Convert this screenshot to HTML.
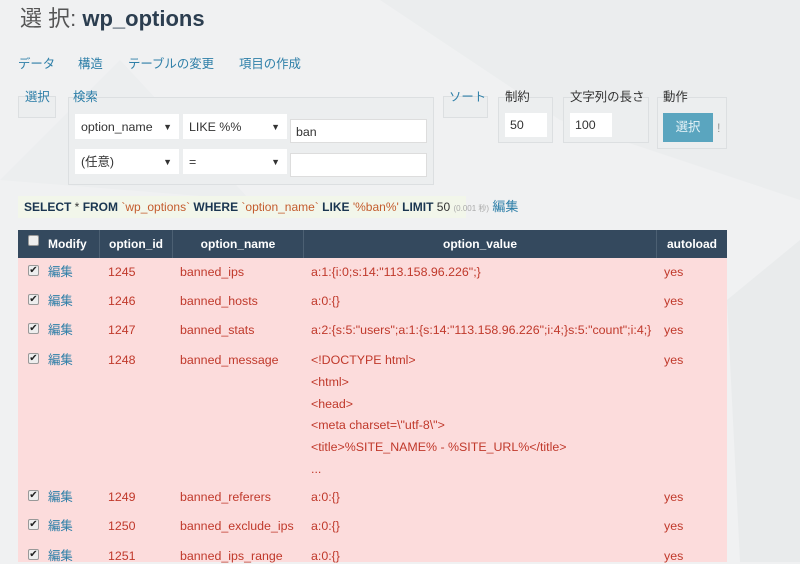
<!DOCTYPE html>
<html><head><meta charset="utf-8"><style>
*{margin:0;padding:0;box-sizing:border-box}
body{width:800px;height:562px;overflow:hidden;background:#f0f1f2;font-family:"Liberation Sans","Noto Sans CJK JP",sans-serif;font-size:12.4px;color:#333;position:relative}
.a{position:absolute;white-space:nowrap;line-height:16px}
.lk{color:#2e7fa8}
.box{position:absolute;border:1px solid #dcdfe1;background:#eceeef}
.sel{position:absolute;background:#fff;height:25px;font-size:12.4px;padding:5px 6px;color:#333;line-height:16px}
.sel i{position:absolute;right:7px;top:5px;font-style:normal;font-size:9px}
.inp{position:absolute;background:#fff;border:1px solid #ddd;height:24px;padding:4px 5px;line-height:16px}
.r{color:#c0392b}
.bg{position:absolute;background:#fcdcdc;left:18px;top:258px;width:709px;height:304px}
.th{position:absolute;top:230px;height:28px;background:#34495e;color:#fff;font-weight:bold;line-height:28px;text-align:center;border-right:1px solid #4c6073;font-size:12px}
.cb{position:absolute;width:11px;height:11px;background:#eee;border:1px solid #999;border-radius:2px;font-size:10px;line-height:9px;text-align:center;color:#222}
</style></head><body>
<svg class="a" style="left:0;top:0" width="800" height="562"><polygon points="380,0 800,0 800,200 560,120" fill="#ebedee"/><polygon points="0,180 120,60 250,200" fill="#eceeef"/><polygon points="727,300 800,240 800,562 740,562" fill="#e9ebec"/></svg>
<div class="a" style="left:20px;top:6px;font-size:22px;line-height:26px;color:#333"><span style="color:#555">選 択:</span> <b style="color:#2c3e50">wp_options</b></div>
<div class="a lk" style="left:18px;top:56px">データ</div>
<div class="a lk" style="left:78px;top:56px">構造</div>
<div class="a lk" style="left:128px;top:56px">テーブルの変更</div>
<div class="a lk" style="left:239px;top:56px">項目の作成</div>
<div class="box" style="left:18px;top:96px;width:38px;height:22px"></div>
<div class="a lk" style="left:25px;top:89px">選択</div>
<div class="box" style="left:68px;top:97px;width:366px;height:88px"></div>
<div class="a lk" style="left:73px;top:89px">検索</div>
<div class="sel" style="left:75px;top:114px;width:104px">option_name<i>▼</i></div>
<div class="sel" style="left:183px;top:114px;width:104px">LIKE %%<i>▼</i></div>
<div class="inp" style="left:290px;top:119px;width:137px">ban</div>
<div class="sel" style="left:75px;top:149px;width:104px">(任意)<i>▼</i></div>
<div class="sel" style="left:183px;top:149px;width:104px">=<i>▼</i></div>
<div class="inp" style="left:290px;top:153px;width:137px"></div>
<div class="box" style="left:443px;top:96px;width:45px;height:22px"></div>
<div class="a lk" style="left:449px;top:89px">ソート</div>
<div class="box" style="left:498px;top:97px;width:55px;height:46px"></div>
<div class="a" style="left:505px;top:89px">制約</div>
<div class="inp" style="left:505px;top:113px;width:42px;border:0">50</div>
<div class="box" style="left:563px;top:97px;width:86px;height:46px"></div>
<div class="a" style="left:570px;top:89px">文字列の長さ</div>
<div class="inp" style="left:570px;top:113px;width:42px;border:0">100</div>
<div class="box" style="left:657px;top:97px;width:70px;height:52px"></div>
<div class="a" style="left:663px;top:89px">動作</div>
<div class="a" style="left:663px;top:113px;width:50px;height:29px;background:#5aa5bf;color:#e8f4f8;text-align:center;line-height:29px">選択</div>
<div class="a" style="left:717px;top:120px;color:#999">!</div>
<div class="a" style="left:18px;top:196px;width:448px;height:22px;background:#f2f6ea"></div>
<div class="a" style="left:24px;top:199px;font-size:12px"><b style="color:#1a3550">SELECT</b> * <b style="color:#1a3550">FROM</b> <span style="color:#c45c2e">`wp_options`</span> <b style="color:#1a3550">WHERE</b> <span style="color:#c45c2e">`option_name`</span> <b style="color:#1a3550">LIKE</b> <span style="color:#c45c2e">'%ban%'</span> <b style="color:#1a3550">LIMIT</b> 50 <span style="font-size:8px;color:#aaa">(0.001 秒)</span> <span class="lk" style="font-size:13px">編集</span></div>
<div class="bg"></div>
<div class="th" style="left:18px;width:82px;text-align:left;padding-left:30px">Modify</div>
<div class="cb" style="left:28px;top:235px"></div>
<div class="th" style="left:100px;width:73px">option_id</div>
<div class="th" style="left:173px;width:131px">option_name</div>
<div class="th" style="left:304px;width:353px">option_value</div>
<div class="th" style="left:657px;width:70px;border:0">autoload</div>
<div id="rows"></div>
<script>
var rows=[[264,"1245","banned_ips",'a:1:{i:0;s:14:"113.158.96.226";}'],[293,"1246","banned_hosts","a:0:{}"],[322,"1247","banned_stats",'a:2:{s:5:"users";a:1:{s:14:"113.158.96.226";i:4;}s:5:"count";i:4;}'],[352,"1248","banned_message","&lt;!DOCTYPE html&gt;"],[489,"1249","banned_referers","a:0:{}"],[518,"1250","banned_exclude_ips","a:0:{}"],[548,"1251","banned_ips_range","a:0:{}"]];
var h="";rows.forEach(function(r){var y=r[0];
h+='<div class="cb" style="left:28px;top:'+(y+1)+'px">✔</div><div class="a lk" style="left:48px;top:'+y+'px">編集</div><div class="a r" style="left:108px;top:'+y+'px">'+r[1]+'</div><div class="a r" style="left:180px;top:'+y+'px">'+r[2]+'</div><div class="a r" style="left:311px;top:'+y+'px">'+r[3]+'</div><div class="a r" style="left:664px;top:'+y+'px">yes</div>';});
["&lt;html&gt;","&lt;head&gt;",'&lt;meta charset=\\"utf-8\\"&gt;',"&lt;title&gt;%SITE_NAME% - %SITE_URL%&lt;/title&gt;","..."].forEach(function(t,i){h+='<div class="a r" style="left:311px;top:'+(374+i*21.7)+'px">'+t+'</div>';});
document.getElementById("rows").innerHTML=h;
</script>
</body></html>
